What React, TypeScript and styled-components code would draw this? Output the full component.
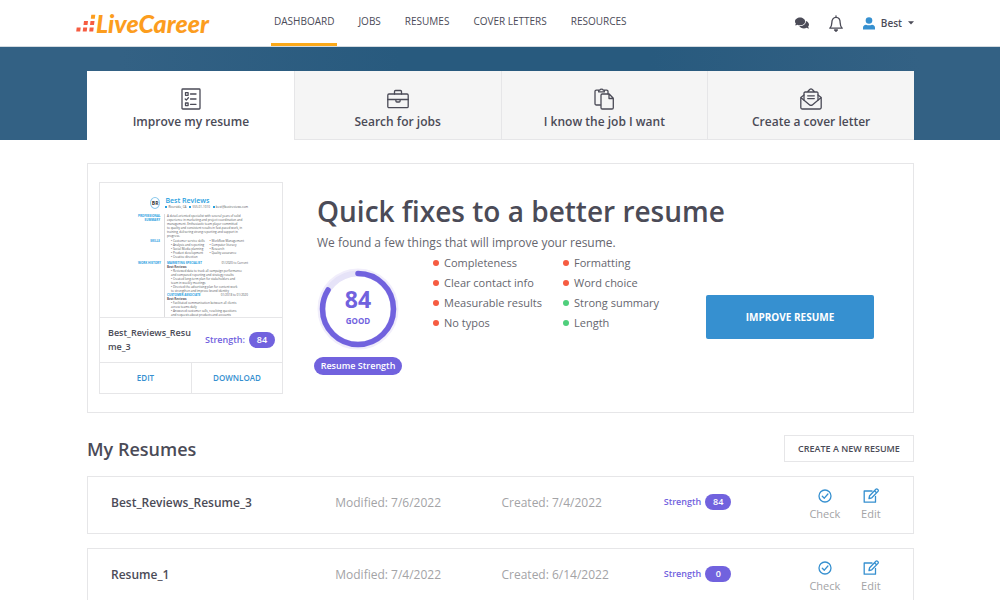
import React from "react";
import styled, { createGlobalStyle } from "styled-components";
import { FaComments } from "react-icons/fa";

const ink = "#4b4b57";
const grey = "#66666e";
const pale = "#a3a3a6";
const line = "#e6e6e8";
const purple = "#7162de";
const blue = "#3690d0";
const red = "#f65c41";
const green = "#4fcf7c";
const orange = "#fc9d1e";

const GlobalStyle = createGlobalStyle`
  *, *::before, *::after { box-sizing: border-box; }
  body {
    margin: 0;
    background: #fff;
    color: ${ink};
    font-family: "Open Sans", "Noto Sans", sans-serif;
    font-size: 12px;
    line-height: 16px;
  }
  h1, h2, p, ul { margin: 0; padding: 0; }
  ul { list-style: none; }
  a { color: inherit; text-decoration: none; }
  button { font: inherit; color: inherit; margin: 0; padding: 0; border: 0; background: none; cursor: pointer; }
  svg { display: block; }
`;

/* ---------- header ---------- */

const Header = styled.header`
  display: flex;
  height: 47px;
  padding: 0 86px 0 76px;
  border-bottom: 1px solid #d3dbe1;
`;

const Logo = styled.a`
  display: flex;
  align-items: center;
  width: 195px;
  color: ${orange};
  font: italic 900 25px/44px Lato, sans-serif;
`;

const Nav = styled.nav`
  display: flex;
  gap: 18px;
`;

const NavLink = styled.a<{ $active?: boolean }>`
  padding: 0 3px;
  border-bottom: 3px solid ${(p) => (p.$active ? "#fba919" : "transparent")};
  font-size: 10px;
  font-weight: 500;
  line-height: 43px;
  white-space: nowrap;
`;

const Tools = styled.div`
  display: flex;
  align-items: center;
  margin-left: auto;
`;

const IconButton = styled.button`
  margin-right: 20px;
`;

const Account = styled.button`
  display: flex;
  align-items: center;
  gap: 6px;
  font-size: 10px;
  font-weight: 600;
`;

/* ---------- tabs ---------- */

const Band = styled.div`
  padding: 24px 86px 0 87px;
  background: linear-gradient(90deg, #336184 12%, #285a7e 40%, #285a7e 65%, #336184 92%);
`;

const Tabs = styled.div`
  display: grid;
  grid-template-columns: repeat(4, 1fr);
`;

const Tab = styled.button<{ $active?: boolean }>`
  display: flex;
  flex-direction: column;
  align-items: center;
  gap: 2px;
  height: 69px;
  padding-top: 17px;
  background: ${(p) => (p.$active ? "#fff" : "#f5f5f5")};
  border-left: 1px solid ${(p) => (p.$active ? "#fff" : line)};
  border-bottom: 1px solid ${(p) => (p.$active ? "#fff" : line)};
  font-size: 12px;
  font-weight: 600;
  line-height: 20px;
`;

/* ---------- hero ---------- */

const Main = styled.main`
  padding: 23px 86px 0 87px;
`;

const Hero = styled.section`
  display: flex;
  align-items: flex-start;
  min-height: 250px;
  padding: 18px 39px 18px 11px;
  border: 1px solid ${line};
`;

const Mini = styled.article`
  flex: none;
  width: 184px;
  margin-right: 34px;
  border: 1px solid ${line};
`;

const Preview = styled.div`
  display: grid;
  grid-template-columns: 22px 1fr;
  align-content: start;
  column-gap: 4px;
  height: 134px;
  padding: 14px 34px 0 38px;
  overflow: hidden;
  color: #55555b;
  font-size: 3px;
  line-height: 4px;
`;

const PreviewHead = styled.div`
  grid-column: 1 / -1;
  display: flex;
  gap: 5px;
  height: 17px;
  padding-left: 12px;
`;

const Monogram = styled.span`
  width: 12px;
  height: 12px;
  border: 1px solid #8cc9ec;
  border-radius: 50%;
  color: #333;
  font-size: 5px;
  font-weight: 700;
  line-height: 10px;
  text-align: center;
`;

const PreviewName = styled.strong`
  display: block;
  color: #28a0df;
  font-size: 7px;
  font-weight: 600;
  line-height: 8px;
`;

const Contact = styled.span`
  display: flex;
  gap: 3px;
  white-space: nowrap;

  span::before {
    content: "";
    display: inline-block;
    width: 2px;
    height: 2px;
    margin-right: 1px;
    background: #28a0df;
  }
`;

const Side = styled.div`
  color: #28a0df;
  font-weight: 700;
  text-align: right;
  white-space: nowrap;
`;

const Body = styled.div<{ $height: number }>`
  height: ${(p) => p.$height}px;
  padding-left: 2px;
  border-left: 1px solid #dcdcde;
  white-space: nowrap;
`;

const SkillGrid = styled.ul`
  display: grid;
  grid-template-columns: 1fr 1fr;
  padding-left: 4px;
`;

const JobTitle = styled.div`
  display: flex;
  justify-content: space-between;
  color: #28a0df;
  font-weight: 700;

  span { color: #55555b; font-weight: 400; }
`;

const Duties = styled.ul`
  padding-left: 4px;
`;

const MiniInfo = styled.div`
  display: flex;
  align-items: center;
  justify-content: space-between;
  height: 45px;
  padding: 0 7px 0 8px;
  border-top: 1px solid ${line};
`;

const MiniName = styled.div`
  width: 84px;
  font-size: 9px;
  font-weight: 600;
  line-height: 14px;
  word-break: break-all;
`;

const Strength = styled.div`
  display: flex;
  align-items: center;
  gap: 4px;
  color: ${purple};
  font-size: 9px;
  font-weight: 600;
`;

const Badge = styled.span`
  min-width: 26px;
  border-radius: 8px;
  background: ${purple};
  color: #fff;
  font-size: 9px;
  font-weight: 600;
  line-height: 16px;
  text-align: center;
`;

const MiniActions = styled.div`
  display: grid;
  grid-template-columns: 1fr 1fr;
  border-top: 1px solid ${line};
`;

const MiniButton = styled.button`
  height: 30px;
  color: ${blue};
  font-size: 8px;
  font-weight: 600;

  & + & { border-left: 1px solid ${line}; }
`;

const HeroBody = styled.div`
  flex: 1;
  min-width: 0;
`;

const Title = styled.h1`
  margin-top: 9px;
  font-size: 28px;
  font-weight: 600;
  line-height: 40px;
`;

const Lead = styled.p`
  margin-top: 2px;
  color: ${grey};
  font-size: 12px;
  line-height: 20px;
`;

const Details = styled.div`
  display: flex;
  align-items: flex-start;
`;

const Score = styled.div`
  display: flex;
  flex-direction: column;
  align-items: center;
  width: 82px;
  margin-top: 15px;
  margin-right: 34px;
`;

const Gauge = styled.div`
  display: grid;
  width: 82px;
  height: 82px;

  > * { grid-area: 1 / 1; }
`;

const GaugeText = styled.div`
  display: flex;
  flex-direction: column;
  align-items: center;
  justify-content: center;
  gap: 2px;
  padding-bottom: 4px;
  color: ${purple};
  font-size: 23px;
  font-weight: 700;
  line-height: 26px;

  span { font-size: 8px; line-height: 14px; }
`;

const ScoreLabel = styled.span`
  margin-top: 7px;
  padding: 0 7px;
  border-radius: 9px;
  background: ${purple};
  color: #fff;
  font-size: 9px;
  font-weight: 600;
  line-height: 18px;
  white-space: nowrap;
`;

const Checks = styled.ul`
  width: 130px;
  color: ${grey};
`;

const Check = styled.li<{ $ok?: boolean }>`
  display: flex;
  align-items: center;
  gap: 5px;
  height: 20px;
  font-size: 11px;
  white-space: nowrap;

  &::before {
    content: "";
    width: 6px;
    height: 6px;
    border-radius: 50%;
    background: ${(p) => (p.$ok ? green : red)};
  }
`;

const Primary = styled.button`
  width: 168px;
  height: 44px;
  margin-top: 42px;
  margin-left: auto;
  border-radius: 2px;
  background: ${blue};
  color: #fff;
  font-size: 10px;
  font-weight: 700;
`;

/* ---------- resume list ---------- */

const ListHead = styled.div`
  display: flex;
  align-items: center;
  justify-content: space-between;
  margin: 22px 0 14px;
`;

const Heading = styled.h2`
  font-size: 18px;
  font-weight: 600;
  line-height: 26px;
`;

const Outline = styled.button`
  width: 130px;
  height: 27px;
  border: 1px solid ${line};
  font-size: 9px;
  font-weight: 600;
  white-space: nowrap;
`;

const Row = styled.article`
  display: grid;
  grid-template-columns: 224fr 166fr 162fr 145fr 104fr;
  align-items: center;
  height: 58px;
  margin-bottom: 14px;
  padding-left: 23px;
  border: 1px solid ${line};
`;

const RowName = styled.strong`
  padding-bottom: 4px;
  font-size: 12px;
  font-weight: 600;
`;

const Meta = styled.span`
  padding-bottom: 4px;
  color: ${pale};
`;

const RowStrength = styled(Strength)`
  padding-bottom: 6px;
`;

const Actions = styled.div`
  display: flex;
  gap: 14px;
`;

const Action = styled.button`
  display: flex;
  flex-direction: column;
  align-items: center;
  gap: 2px;
  min-width: 32px;
  color: ${pale};
  font-size: 11px;

  svg { color: ${blue}; }
`;

/* ---------- drawings ---------- */

const stroke = {
  fill: "none",
  stroke: "currentColor",
  strokeLinecap: "round" as const,
  strokeLinejoin: "round" as const,
};

const LogoDots = () => (
  <svg width="20" height="18" viewBox="0 0 20 18" aria-hidden="true">
    <g fill={red}>
      <path d="M.7 13.4h4l-.5 4H.2zM7.2 13.4h4l-.5 4h-4zM13.7 13.4h4l-.5 4h-4zM8 7h4l-.5 4h-4zM14.5 7h4l-.5 4h-4z" />
    </g>
    <path fill={orange} d="M15.3.8h4l-.5 4h-4z" />
  </svg>
);

const Bell = () => (
  <svg width="14" height="17" viewBox="0 0 14 17" {...stroke} strokeWidth="1.3" aria-hidden="true">
    <path d="M7 .8v1.400M.8 13.200c1.500-1.300 2-2.800 2-5.200 0-3.600 1.600-5.700 4.200-5.700s4.200 2.100 4.200 5.700c0 2.400.5 3.900 2 5.200z" />
    <path d="M5.600 15h2.800L7 16.300z" fill="currentColor" />
  </svg>
);

const Person = () => (
  <svg width="12" height="13" viewBox="0 0 12 13" fill={blue} aria-hidden="true">
    <circle cx="6" cy="3.500" r="3.300" />
    <path d="M0 12.500v-1.800C0 9 1.200 8 3 7.700c2 .8 4 .8 6 0 1.800.3 3 1.300 3 3v1.800z" />
  </svg>
);

const Caret = () => (
  <svg width="6" height="4" viewBox="0 0 6 4" fill="currentColor" aria-hidden="true">
    <path d="M0 .3h6L3 3.500z" />
  </svg>
);

const Checklist = () => (
  <svg width="22" height="22" viewBox="0 0 22 22" {...stroke} strokeWidth="1.300" aria-hidden="true">
    <rect x="2" y="1" width="18" height="20" rx="0.800" />
    <path d="M5.500 4.700h2.600v2.600H5.500zM5.500 15h2.600v2.600H5.500zM10.500 6h5.500M10.500 11h5.500M10.500 16.300h5.500M5.200 11l1.100 1.100L8.400 9.800" />
  </svg>
);

const Briefcase = () => (
  <svg width="22" height="22" viewBox="0 0 22 22" {...stroke} strokeWidth="1.300" aria-hidden="true">
    <rect x="0.800" y="6" width="20.400" height="13.700" rx="1.200" />
    <path d="M7.500 6V3.500a1 1 0 0 1 1-1h5a1 1 0 0 1 1 1V6M.8 11.500h20.400M8.900 11.700v1.300a1 1 0 0 0 1 1h2.200a1 1 0 0 0 1-1v-1.300" />
  </svg>
);

const Clipboard = () => (
  <svg width="22" height="22" viewBox="0 0 22 22" {...stroke} strokeWidth="1.300" aria-hidden="true">
    <path d="M7.500 17H3.300A1.300 1.300 0 0 1 2 15.700V3.500a1.300 1.300 0 0 1 1.300-1.300H6.700a2 2 0 0 1 3.600 0h3.400A1.300 1.300 0 0 1 15 3.500v2.300M5.700 2.400v1.500h5.600V2.400" />
    <path d="M8 7.200A1.200 1.200 0 0 1 9.200 6h7l4.100 4.300v9.400a1.300 1.300 0 0 1-1.300 1.300H9.300A1.300 1.300 0 0 1 8 19.700zM16 6.200v4.300h4.200" />
  </svg>
);

const Letter = () => (
  <svg width="22" height="22" viewBox="0 0 22 22" {...stroke} strokeWidth="1.300" aria-hidden="true">
    <path d="M.8 9.500v10A1.500 1.500 0 0 0 2.300 21h17.400a1.500 1.500 0 0 0 1.500-1.500v-10L18 7M.8 9.500 4 7M.8 9.500l8.600 7.200a2.500 2.500 0 0 0 3.200 0l8.600-7.200" />
    <path d="M4 12V5.200A1.200 1.200 0 0 1 5.200 4h11.600A1.200 1.200 0 0 1 18 5.200V12M7.500 3.800l2.200-2.300a1.900 1.900 0 0 1 2.600 0l2.200 2.300M7.700 7.800h6.600M7.700 10.600h6.600" />
  </svg>
);

const Ring = () => (
  <svg width="82" height="82" viewBox="0 0 82 82" fill="none" aria-hidden="true">
    <circle cx="41" cy="41" r="39" stroke="#f1eefb" strokeWidth="3" />
    <circle cx="41" cy="41" r="35.500" stroke="#e6e3f8" strokeWidth="6" />
    <circle
      cx="41"
      cy="41"
      r="35.500"
      stroke={purple}
      strokeWidth="5.500"
      strokeLinecap="round"
      pathLength="100"
      strokeDasharray="84 100"
      transform="rotate(-90 41 41)"
    />
  </svg>
);

const CheckIcon = () => (
  <svg width="16" height="16" viewBox="0 0 16 16" {...stroke} strokeWidth="1.300" aria-hidden="true">
    <circle cx="8" cy="8" r="6" />
    <path d="m5.300 8.200 2 2L10.900 6" />
  </svg>
);

const EditIcon = () => (
  <svg width="16" height="16" viewBox="0 0 16 16" {...stroke} strokeWidth="1.300" aria-hidden="true">
    <path d="M9 3H1.200v11.200h11.300V8.500M6 10.500l.6-2.800L12.900 1.300a1.100 1.100 0 0 1 1.600 0l.5.500a1.100 1.100 0 0 1 0 1.600L8.800 9.800zM11.500 2.800l2 2" />
  </svg>
);

/* ---------- data ---------- */

const navItems = ["DASHBOARD", "JOBS", "RESUMES", "COVER LETTERS", "RESOURCES"];

const tabs = [
  { label: "Improve my resume", icon: <Checklist /> },
  { label: "Search for jobs", icon: <Briefcase /> },
  { label: "I know the job I want", icon: <Clipboard /> },
  { label: "Create a cover letter", icon: <Letter /> },
];

const checks = [
  [
    { label: "Completeness" },
    { label: "Clear contact info" },
    { label: "Measurable results" },
    { label: "No typos" },
  ],
  [
    { label: "Formatting" },
    { label: "Word choice" },
    { label: "Strong summary", ok: true },
    { label: "Length", ok: true },
  ],
];

const resumes = [
  { name: "Best_Reviews_Resume_3", modified: "7/6/2022", created: "7/4/2022", strength: 84 },
  { name: "Resume_1", modified: "7/4/2022", created: "6/14/2022", strength: 0 },
];

const ResumePreview = () => (
  <Preview>
    <PreviewHead>
      <Monogram>BR</Monogram>
      <div>
        <PreviewName>Best Reviews</PreviewName>
        <Contact>
          <span>Riverside, CA</span>
          <span>555-01-1010</span>
          <span>best@bestreviews.com</span>
        </Contact>
      </div>
    </PreviewHead>
    <Side>PROFESSIONAL<br />SUMMARY</Side>
    <Body $height={25}>
      A detail-oriented specialist with several years of solid<br />
      experience in marketing and project coordination and<br />
      management. Enthusiastic team player committed<br />
      to quality and consistent results in fast-paced work, in<br />
      training, delivering strong reporting and support in<br />
      progress.
    </Body>
    <Side>SKILLS</Side>
    <Body $height={22}>
      <SkillGrid>
        <li>• Customer service skills</li>
        <li>• Workflow Management</li>
        <li>• Analysis and reporting</li>
        <li>• Computer literacy</li>
        <li>• Social Media planning</li>
        <li>• Research</li>
        <li>• Product development</li>
        <li>• Quality assurance</li>
        <li>• Creative direction</li>
      </SkillGrid>
    </Body>
    <Side>WORK HISTORY</Side>
    <Body $height={60}>
      <JobTitle>MARKETING SPECIALIST <span>01/2020 to Current</span></JobTitle>
      <b>Best Reviews</b>
      <Duties>
        <li>• Reviewed data to track all campaign performance</li>
        <li>and compared reporting and strategy results</li>
        <li>• Created long-term plan for stakeholders and</li>
        <li>team in weekly meetings</li>
        <li>• Directed the advertising plan for content work</li>
        <li>to strengthen and improve brand identity</li>
      </Duties>
      <JobTitle>CUSTOMER ASSOCIATE <span>01/2018 to 01/2020</span></JobTitle>
      <b>Best Reviews</b>
      <Duties>
        <li>• Facilitated communication between all clients</li>
        <li>across teams daily</li>
        <li>• Answered customer calls, resolving questions</li>
        <li>and requests about products and accounts</li>
      </Duties>
    </Body>
  </Preview>
);

export default function App() {
  return (
    <>
      <GlobalStyle />
      <Header>
        <Logo href="#">
          <LogoDots />
          LiveCareer
        </Logo>
        <Nav>
          {navItems.map((item, i) => (
            <NavLink key={item} href="#" $active={i === 0}>{item}</NavLink>
          ))}
        </Nav>
        <Tools>
          <IconButton aria-label="Messages"><FaComments size={14} /></IconButton>
          <IconButton aria-label="Notifications"><Bell /></IconButton>
          <Account>
            <Person />
            Best
            <Caret />
          </Account>
        </Tools>
      </Header>

      <Band>
        <Tabs>
          {tabs.map((tab, i) => (
            <Tab key={tab.label} $active={i === 0}>
              {tab.icon}
              {tab.label}
            </Tab>
          ))}
        </Tabs>
      </Band>

      <Main>
        <Hero>
          <Mini>
            <ResumePreview />
            <MiniInfo>
              <MiniName>Best_Reviews_Resume_3</MiniName>
              <Strength>Strength: <Badge>84</Badge></Strength>
            </MiniInfo>
            <MiniActions>
              <MiniButton>EDIT</MiniButton>
              <MiniButton>DOWNLOAD</MiniButton>
            </MiniActions>
          </Mini>

          <HeroBody>
            <Title>Quick fixes to a better resume</Title>
            <Lead>We found a few things that will improve your resume.</Lead>
            <Details>
              <Score>
                <Gauge>
                  <Ring />
                  <GaugeText>84<span>GOOD</span></GaugeText>
                </Gauge>
                <ScoreLabel>Resume Strength</ScoreLabel>
              </Score>
              {checks.map((column, i) => (
                <Checks key={i}>
                  {column.map((c) => (
                    <Check key={c.label} $ok={"ok" in c}>{c.label}</Check>
                  ))}
                </Checks>
              ))}
              <Primary>IMPROVE RESUME</Primary>
            </Details>
          </HeroBody>
        </Hero>

        <ListHead>
          <Heading>My Resumes</Heading>
          <Outline>CREATE A NEW RESUME</Outline>
        </ListHead>

        {resumes.map((r) => (
          <Row key={r.name}>
            <RowName>{r.name}</RowName>
            <Meta>Modified: {r.modified}</Meta>
            <Meta>Created: {r.created}</Meta>
            <RowStrength>Strength <Badge>{r.strength}</Badge></RowStrength>
            <Actions>
              <Action><CheckIcon />Check</Action>
              <Action><EditIcon />Edit</Action>
            </Actions>
          </Row>
        ))}
      </Main>
    </>
  );
}
